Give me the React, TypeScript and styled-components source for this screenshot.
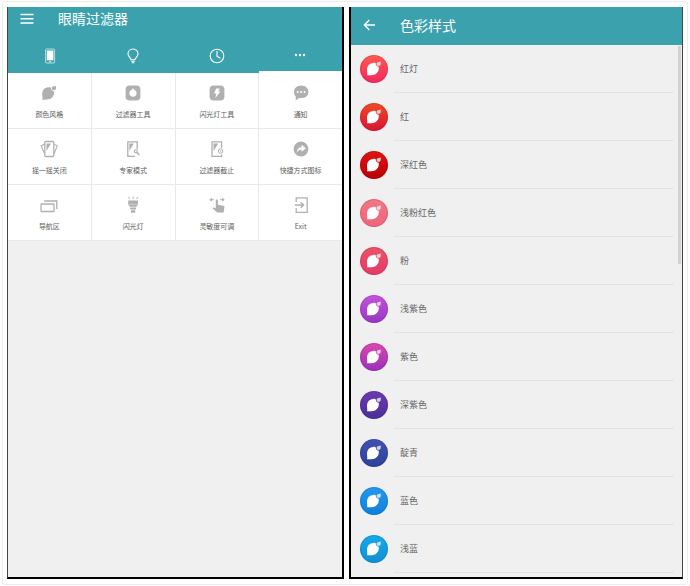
import React from "react";
import styled, { createGlobalStyle } from "styled-components";

const TEAL = "#3ba2ad";

const GlobalStyle = createGlobalStyle`
  *, *::before, *::after { box-sizing: border-box; }
  body {
    margin: 0;
    background: #fdfdfd;
    color: #6c6c6c;
    font-family: "Noto Sans CJK SC", Roboto, sans-serif;
  }
  button { font: inherit; color: inherit; background: none; border: 0; padding: 0; margin: 0; cursor: pointer; }
  svg { display: block; }
  ul { list-style: none; margin: 0; padding: 0; }
`;

const Page = styled.div`
  display: flex;
  min-height: 100vh;
  padding: 1px 2px;
`;

const Frame = styled.main`
  flex: 1;
  display: grid;
  grid-template-columns: 337fr 334fr;
  gap: 5px;
  padding: 5px 4px;
  border: 1px solid #ececea;
  border-radius: 3px;
  background: #fff;
`;

const Phone = styled.section<{ $wideSide: "left" | "right" }>`
  display: flex;
  flex-direction: column;
  min-width: 0;
  background: #f0f0f0;
  border: solid #000;
  border-width: 0 1px 2px;
  border-color: ${(p) => (p.$wideSide === "right" ? "#000 #000 #000 #444" : "#000 #444 #000 #000")};
  border-${(p) => p.$wideSide}-width: 2px;
`;

const AppBar = styled.header<{ $tall?: boolean }>`
  display: flex;
  align-items: center;
  height: ${(p) => (p.$tall ? 38 : 24)}px;
  padding-left: ${(p) => (p.$tall ? 11 : 12)}px;
  padding-bottom: 2px;
  gap: ${(p) => (p.$tall ? 23 : 24)}px;
  background: ${TEAL};
  color: #fff;
`;

const Title = styled.h1`
  margin: 0;
  font-size: 14px;
  line-height: 20px;
  font-weight: 400;
`;

const Tabs = styled.div`
  display: grid;
  grid-template-columns: repeat(4, 1fr);
  height: 42px;
  background: ${TEAL};
  color: #fff;
`;

const Tab = styled.button<{ $active?: boolean }>`
  && {
    display: flex;
    align-items: center;
    justify-content: center;
    padding-top: 8px;
    border-bottom: ${(p) => (p.$active ? "2px solid #fff" : "0")};
  }
`;

const ToolGrid = styled.div`
  display: grid;
  grid-template-columns: repeat(4, 1fr);
  gap: 1px;
  padding-bottom: 1px;
  background: #e9e9e9;
`;

const Tool = styled.button`
  && {
    display: flex;
    flex-direction: column;
    align-items: center;
    gap: 6px;
    height: 55px;
    padding-top: 11px;
    background: #fff;
    color: #606060;
  }
  svg { color: #b0b0b0; }
`;

const ToolLabel = styled.span`
  font-size: 7px;
  line-height: 12px;
  white-space: nowrap;
`;

const ListArea = styled.div`
  position: relative;
  flex: 1;
  padding-bottom: 4px;
`;

const ColorRow = styled.li`
  display: flex;
  height: 48px;
  padding-left: 9px;
  padding-right: 8px;
`;

const ColorButton = styled.button`
  && {
    flex: 1;
    display: flex;
    align-items: center;
    gap: 6px;
    text-align: left;
  }
`;

const ColorName = styled.span`
  flex: 1;
  align-self: stretch;
  display: flex;
  align-items: center;
  padding-left: 6px;
  border-bottom: 1px solid #e2e2e2;
  font-size: 9px;
  line-height: 14px;
  color: #666;
`;

const ScrollThumb = styled.div`
  position: absolute;
  top: 1px;
  right: 1px;
  width: 3px;
  height: 218px;
  background: #d2d2d2;
`;

const Icon = ({ children }: { children: React.ReactNode }) => (
  <svg width="18" height="18" viewBox="0 0 18 18" fill="none" stroke="currentColor" strokeWidth="1.1" aria-hidden="true">
    {children}
  </svg>
);

const BODY =
  "M7 20.3C7.7 19 7 17.600 7 14.800C7 10.800 9.400 8.200 12.900 7.900C13.900 7.800 14.900 7.900 15.700 8.200C15.700 10.100 17 11.600 18.700 11.800C19.300 15.400 17.600 18.600 14.200 19.700C11.900 20.500 9.400 20.200 7 20.300Z";
const BUD =
  "M20.9 6.500C20.600 7.200 20.900 8 20.800 8.800C20.700 10.100 19.800 10.900 18.700 10.900C17.500 10.900 16.600 10 16.600 8.900C16.600 7.700 17.500 6.900 18.700 6.900C19.500 6.800 20.200 6.900 20.900 6.500Z";

const Swatch = ({ id, from, to }: { id: string; from: string; to: string }) => (
  <svg width="28" height="28" viewBox="0 0 28 28" aria-hidden="true">
    <defs>
      <linearGradient id={id} x1="0" y1="0" x2="0" y2="1">
        <stop offset="0" stopColor={from} />
        <stop offset="1" stopColor={to} />
      </linearGradient>
    </defs>
    <circle cx="14" cy="14" r="14" fill={`url(#${id})`} />
    <circle cx="14" cy="14" r="13.5" fill="none" stroke="#000" strokeOpacity="0.1" />
    <path d={BODY} fill="#fff" />
    <path d={BUD} fill="#fff" fillOpacity="0.75" />
  </svg>
);

const tabs = [
  {
    name: "屏幕",
    icon: (
      <Icon>
        <rect x="4.6" y="2" width="9" height="14" rx="1" strokeWidth="0.9" strokeOpacity="0.7" />
        <rect x="5.8" y="3.5" width="6.6" height="9.8" fill="#fff" stroke="none" />
        <path d="M8 14.7h2.2" strokeWidth="0.8" />
      </Icon>
    ),
  },
  {
    name: "灯",
    icon: (
      <Icon>
        <path d="M7 12.8C7 10.6 4 9.8 4 6.8C4 4 6.2 2 9 2s5 2 5 4.8c0 3-3 3.8-3 6Z" />
        <path d="M7.2 14.2h3.6M7.7 15.7h2.6" />
      </Icon>
    ),
  },
  {
    name: "时间",
    icon: (
      <Icon>
        <circle cx="9" cy="9" r="6.8" />
        <path d="M9 4v5.2l3.4 2" />
      </Icon>
    ),
  },
  {
    name: "更多",
    icon: (
      <Icon>
        <g fill="currentColor" stroke="none">
          <circle cx="5" cy="9" r="1.2" />
          <circle cx="9" cy="9" r="1.2" />
          <circle cx="13" cy="9" r="1.2" />
        </g>
      </Icon>
    ),
  },
];

const tools = [
  {
    label: "颜色风格",
    icon: (
      <g transform="translate(-4.8 -4.6)" fill="currentColor" stroke="none">
        <path d={BODY} />
        <path d={BUD} />
      </g>
    ),
  },
  {
    label: "过滤器工具",
    icon: (
      <>
        <rect x="1.6" y="1.6" width="14.8" height="14.8" rx="4" fill="currentColor" stroke="none" />
        <path d="M9 4.2l1.6 1.9c1.2.6 2 1.7 2 3a3.6 3.6 0 0 1-7.2 0c0-1.3.8-2.4 2-3Z" fill="#fff" stroke="none" />
      </>
    ),
  },
  {
    label: "闪光灯工具",
    icon: (
      <>
        <rect x="1.6" y="1.6" width="14.8" height="14.8" rx="4" fill="currentColor" stroke="none" />
        <path d="M8.2 4.4h3.6L10.4 7.6h2L7.4 14l.9-4.4H6Z" fill="#fff" stroke="none" />
      </>
    ),
  },
  {
    label: "通知",
    icon: (
      <>
        <path d="M9.2 1.6c4.2 0 7.2 2.8 7.2 6.3s-3 6.2-7.2 6.2c-.8 0-1.4 0-2-.2L3.6 16.6l.2-4.1C2.6 11.3 2 9.8 2 7.9c0-3.5 3-6.3 7.2-6.3Z" fill="currentColor" stroke="none" />
        <g fill="#fff" stroke="none">
          <circle cx="5.6" cy="8" r="1" />
          <circle cx="9.1" cy="8" r="1" />
          <circle cx="12.6" cy="8" r="1" />
        </g>
      </>
    ),
  },
  {
    label: "摇一摇关闭",
    icon: (
      <>
        <rect x="4.8" y="1.5" width="9" height="15" rx="1" strokeWidth="1.3" />
        <path d="M4.4 4.3L1.2 5.8L4.4 13.6M14.2 4.3l3 1.5l-3 7.8" />
        <path d="M6.5 3.5h4.5L6.5 11Z" fill="currentColor" stroke="none" />
      </>
    ),
  },
  {
    label: "专家模式",
    icon: (
      <>
        <path d="M11 16.3H3.8V1.8h9.4v7.5" strokeWidth="1.3" />
        <path d="M5.3 3.5h4.5L5.3 11Z" fill="currentColor" stroke="none" />
        <circle cx="11.7" cy="11.3" r="1.5" />
        <path d="M12.8 12.4l2.6 2.6" strokeWidth="1.6" />
      </>
    ),
  },
  {
    label: "过滤器截止",
    icon: (
      <>
        <path d="M13.6 14.5v1.8H4V1.8h9.6v6" strokeWidth="1.3" />
        <path d="M5.5 3.5h4.8L5.5 11Z" fill="currentColor" stroke="none" />
        <circle cx="12.6" cy="11" r="2.2" strokeWidth="1" />
        <circle cx="12.6" cy="11" r="0.7" fill="currentColor" stroke="none" />
      </>
    ),
  },
  {
    label: "快捷方式图标",
    icon: (
      <>
        <circle cx="9" cy="9" r="7.4" fill="currentColor" stroke="none" />
        <path d="M9.6 4.8l4.2 3.5l-4.2 3.5V9.7C7.4 9.6 5.7 10.5 4.7 12.7C4.9 9.3 6.5 7.2 9.6 6.9Z" fill="#fff" stroke="none" />
      </>
    ),
  },
  {
    label: "导航区",
    icon: (
      <>
        <rect x="1" y="8" width="13" height="7.5" rx="0.6" strokeWidth="1.3" />
        <path d="M4 5h12.8v8" strokeWidth="1.3" />
      </>
    ),
  },
  {
    label: "闪光灯",
    icon: (
      <>
        <path d="M4.2 4.6h9.8v3.6c0 1.1-1.5 1.7-1.5 2.6H5.7c0-.9-1.5-1.5-1.5-2.6ZM6.2 11.4h5.8v2.2H6.2ZM7 14.2h4.2v2.6H7Z" fill="currentColor" stroke="none" />
        <path d="M9.1 .6v2.5M4.4 .9l1.3 2.2M13.8 .9l-1.3 2.2" strokeWidth="0.9" />
        <path d="M4.8 8.3h8.6" stroke="#fff" strokeWidth="0.4" />
      </>
    ),
  },
  {
    label: "灵敏度可调",
    icon: (
      <>
        <path d="M7.8 4.5c0-1.4 2.1-1.4 2.1 0v4.3l5.4 1c.8.2 1.2.8 1.1 1.6l-.8 5.2H9.3L4.6 12.2c.7-1.1 1.8-.8 3.2.2Z" fill="currentColor" stroke="none" />
        <path d="M2 3.7h4M12 3.7h4" strokeWidth="1" />
        <path d="M3.8 1.6L1.3 3.7l2.5 2.1ZM14.2 1.6l2.5 2.1l-2.5 2.1Z" fill="currentColor" stroke="none" />
      </>
    ),
  },
  {
    label: "Exit",
    icon: (
      <>
        <path d="M4.2 6V1.8h11v14.6h-11V12" strokeWidth="1.3" />
        <path d="M2.8 9h8.5M8.7 6.2L11.6 9l-2.9 2.8" strokeWidth="1.5" />
      </>
    ),
  },
];

const colors = [
  { name: "红灯", from: "#ff5a50", to: "#f5265e" },
  { name: "红", from: "#f04a26", to: "#d81334" },
  { name: "深红色", from: "#e01512", to: "#b90006" },
  { name: "浅粉红色", from: "#f27884", to: "#f0637c" },
  { name: "粉", from: "#ec5266", to: "#e43a68" },
  { name: "浅紫色", from: "#c653dc", to: "#9636c2" },
  { name: "紫色", from: "#d948ac", to: "#9b2fbc" },
  { name: "深紫色", from: "#6c3ab0", to: "#4a2f98" },
  { name: "靛青", from: "#4350b4", to: "#2c4296" },
  { name: "蓝色", from: "#2498ee", to: "#0e80dc" },
  { name: "浅蓝", from: "#16a8ee", to: "#108fd2" },
];

export default function App() {
  return (
    <>
      <GlobalStyle />
      <Page>
        <Frame>
          <Phone $wideSide="right">
            <AppBar>
              <button aria-label="菜单">
                <svg width="14" height="14" viewBox="0 0 14 14" stroke="#fff" strokeWidth="1.5" aria-hidden="true">
                  <path d="M0.5 3.5h13M0.5 7.7h13M0.5 11.9h13" />
                </svg>
              </button>
              <Title>眼睛过滤器</Title>
            </AppBar>
            <Tabs role="tablist">
              {tabs.map((tab, i) => (
                <Tab key={tab.name} role="tab" aria-label={tab.name} aria-selected={i === 3} $active={i === 3}>
                  {tab.icon}
                </Tab>
              ))}
            </Tabs>
            <ToolGrid>
              {tools.map((tool) => (
                <Tool key={tool.label}>
                  <Icon>{tool.icon}</Icon>
                  <ToolLabel>{tool.label}</ToolLabel>
                </Tool>
              ))}
            </ToolGrid>
          </Phone>
          <Phone $wideSide="left">
            <AppBar $tall>
              <button aria-label="返回">
                <svg width="15" height="14" viewBox="0 0 15 14" fill="none" stroke="#fff" strokeWidth="1.3" aria-hidden="true">
                  <path d="M13 7H2.5M7.3 2L2.3 7l5 5" />
                </svg>
              </button>
              <Title>色彩样式</Title>
            </AppBar>
            <ListArea>
              <ul>
                {colors.map((color, i) => (
                  <ColorRow key={color.name}>
                    <ColorButton>
                      <Swatch id={`swatch-${i}`} from={color.from} to={color.to} />
                      <ColorName>{color.name}</ColorName>
                    </ColorButton>
                  </ColorRow>
                ))}
              </ul>
              <ScrollThumb />
            </ListArea>
          </Phone>
        </Frame>
      </Page>
    </>
  );
}
